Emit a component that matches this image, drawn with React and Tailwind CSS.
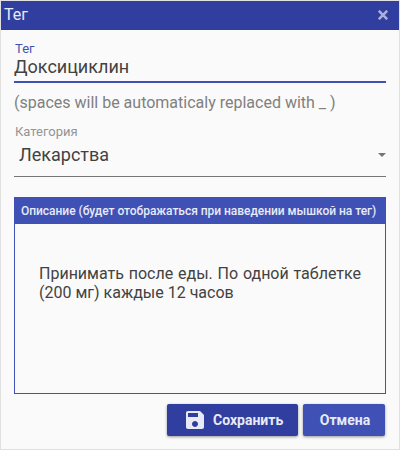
import React from 'react';

const CloseIcon = () => (
    <svg width="10" height="10" viewBox="0 0 10 10" fill="none" stroke="#abb0d9" strokeWidth="2.6">
        <path d="M0.8 0.8 9.2 9.2M9.2 0.8 0.8 9.2" />
    </svg>
);

const SaveIcon = () => (
    <svg width="24" height="24" viewBox="0 0 24 24" fill="currentColor">
        <path d="M17 3H5c-1.11 0-2 .9-2 2v14c0 1.1.89 2 2 2h14c1.1 0 2-.9 2-2V7l-4-4zm-5 16c-1.66 0-3-1.34-3-3s1.34-3 3-3 3 1.34 3 3-1.34 3-3 3zm3-10H5V5h10v4z" />
    </svg>
);

const App = () => {
    return (
        <div className="flex flex-col w-[400px] h-[450px] bg-[#fafafa] border border-[#e0e0e0] font-['Roboto',sans-serif] text-[#424242]">
            <header className="flex justify-between h-[29px] pl-[3px] pr-[11px] bg-[#303f9f] text-[#e8eaf6]">
                <h1 className="text-base leading-[27px]">Тег</h1>
                <button type="button" aria-label="Закрыть" className="flex items-center h-[28px]">
                    <CloseIcon />
                </button>
            </header>

            <form className="flex flex-col px-[13px]">
                <div className="flex flex-col h-[53px] pt-[11px] border-b-2 border-[#3f51b5]">
                    <label className="pl-px text-[13px] leading-4 text-[#3f51b5]">Тег</label>
                    <div className="text-lg leading-5">Доксициклин</div>
                </div>
                <p className="mt-[10px] text-base leading-5 text-[#808080]">(spaces will be automaticaly replaced with _ )</p>

                <div className="flex flex-col mt-[11px] h-[53px] border-b border-[#757575]">
                    <label className="pl-px text-[13px] leading-4 text-[#949494]">Категория</label>
                    <div className="flex items-center justify-between pl-[5px] h-[29px] text-lg">
                        <span>Лекарства</span>
                        <svg width="8" height="4" viewBox="0 0 8 4" fill="#757575">
                            <path d="M0 0h8L4 4z" />
                        </svg>
                    </div>
                </div>

                <section className="mt-5 h-[197px] border border-[#3f51b5]">
                    <h2 className="h-[26px] pl-[6px] bg-[#3f51b5] text-xs font-medium leading-[27px] tracking-[-0.035px] text-[#e8eaf6] whitespace-nowrap">
                        Описание (будет отображаться при наведении мышкой на тег)
                    </h2>
                    <p className="mt-[40px] mx-6 text-base leading-[19px] text-justify">
                        Принимать после еды. По одной таблетке (200 мг) каждые 12 часов
                    </p>
                </section>

                <div className="flex justify-end gap-[5px] mt-[10px] pr-px text-sm font-bold text-[#e8eaf6]">
                    <button type="button" className="flex items-center gap-[6px] w-[131px] h-8 pl-4 rounded-xs bg-[#303f9f] shadow-[0_1px_3px_rgba(0,0,0,0.4)]">
                        <SaveIcon />
                        Сохранить
                    </button>
                    <button type="button" className="w-[82px] h-8 pl-0.5 rounded-xs bg-[#3f51b5] shadow-[0_1px_3px_rgba(0,0,0,0.4)]">
                        Отмена
                    </button>
                </div>
            </form>
        </div>
    );
};

export default App;
